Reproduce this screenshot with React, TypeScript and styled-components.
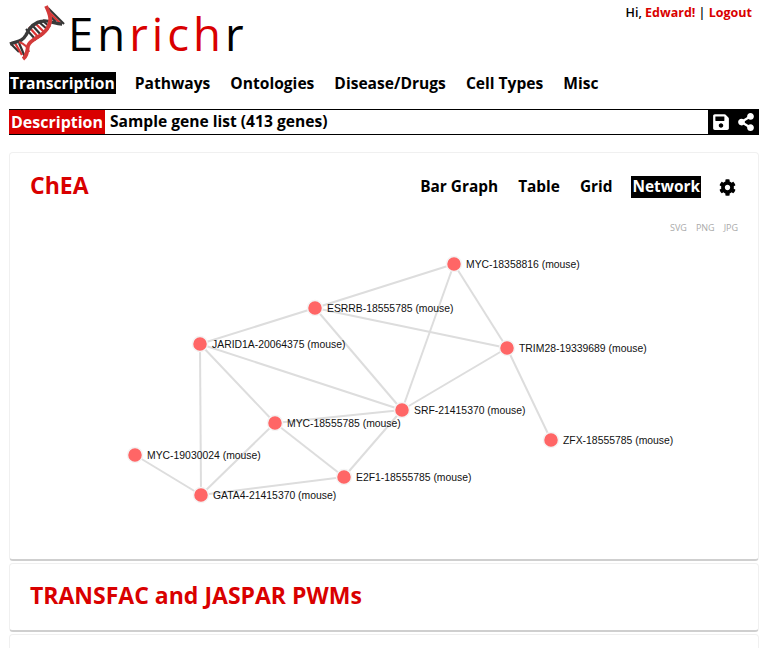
import React from "react";
import styled, { createGlobalStyle } from "styled-components";
import { FaSave, FaShareAlt, FaCog } from "react-icons/fa";

const Global = createGlobalStyle`
  html, body { margin: 0; padding: 0; background: #fff; overflow: hidden; }
  body { font-family: "Open Sans", "Liberation Sans", sans-serif; color: #000; }
`;

const Page = styled.div`
  width: 768px; height: 648px; overflow: hidden; padding: 0 9px; box-sizing: border-box;
`;
const Header = styled.header`
  display: flex; justify-content: space-between; height: 72px;
`;
const Brand = styled.div`
  display: flex; align-items: flex-start; padding-top: 2px; margin-left: -4px;
`;
const LogoSvg = styled.svg`
  display: block; flex: none;
`;
const Wordmark = styled.h1`
  margin: 3px 0 0 -1px; font-weight: 400; font-size: 45.5px; line-height: 56px; letter-spacing: 4px; color: #000;
`;
const Red = styled.span`color: #d90000;`;
const UserBar = styled.div`
  font-size: 12.5px; font-weight: 600; line-height: 17px; padding: 4px 7px 0 0;
`;
const UserLink = styled.span`color: #d90000; font-weight: 700;`;
const MainNav = styled.nav`
  display: flex; gap: 18px; height: 37px; align-items: flex-start;
`;
const NavItem = styled.span<{ $active?: boolean }>`
  font-size: 15.6px; font-weight: 700; line-height: 22px; height: 22px; padding: 0 1px;
  background: ${(p) => (p.$active ? "#000" : "transparent")};
  color: ${(p) => (p.$active ? "#fff" : "#000")};
`;
const DescBar = styled.div`
  display: flex; align-items: stretch; width: 750px; height: 26px; box-sizing: border-box;
  border-top: 1px solid #000; border-bottom: 1px solid #000; margin-bottom: 17px;
`;
const DescLabel = styled.div`
  background: #d90000; color: #fff; font-size: 16px; font-weight: 700; line-height: 24px; width: 96px; text-align: center; margin-right: 5px; flex: none;
`;
const DescText = styled.div`
  flex: 1; font-size: 15.6px; font-weight: 700; line-height: 22px; white-space: nowrap;
`;
const DescIcons = styled.div`
  background: #000; color: #fff; width: 51px; display: flex; align-items: center; justify-content: space-between; padding: 0 4px 0 4px; box-sizing: border-box; flex: none;
`;
const Card = styled.section`
  background: #fff; border-radius: 4px; width: 750px; box-sizing: border-box;
  border: 1px solid #f0f0f0; border-bottom: 2px solid #cfcfcf; margin-bottom: 2px;
`;
const ChartCard = styled(Card)`height: 409px; padding: 17px 20px 0;`;
const PlainCard = styled(Card)`height: 69px; padding: 16px 20px 0;`;
const EmptyCard = styled(Card)`height: 40px;`;
const CardHead = styled.div`
  display: flex; justify-content: space-between; align-items: flex-start; height: 51px;
`;
const CardTitle = styled.h2`
  margin: 0; font-size: 23px; line-height: 30px; font-weight: 700; color: #d90000;
`;
const Views = styled.div`
  display: flex; align-items: center; gap: 18px; padding: 6px 2px 0 0; color: #000;
`;
const ViewTab = styled.span<{ $active?: boolean }>`
  font-size: 15.4px; font-weight: 700; line-height: 22px; padding: 0 1px;
  background: ${(p) => (p.$active ? "#000" : "transparent")};
  color: ${(p) => (p.$active ? "#fff" : "#000")};
`;
const Exports = styled.div`
  display: flex; justify-content: flex-end; gap: 9px; font-size: 9px; line-height: 13px; color: #aaa; font-weight: 400;
`;
const GraphSvg = styled.svg`
  display: block; margin: -4px 0 0 -20px;
`;

type N = { id: string; x: number; y: number; label: string };
const OX = 10, OY = 230;
const nodes: N[] = [
  { id: "a", x: 454, y: 264, label: "MYC-18358816 (mouse)" },
  { id: "b", x: 315, y: 308, label: "ESRRB-18555785 (mouse)" },
  { id: "c", x: 200, y: 344, label: "JARID1A-20064375 (mouse)" },
  { id: "d", x: 507, y: 348, label: "TRIM28-19339689 (mouse)" },
  { id: "e", x: 402, y: 410, label: "SRF-21415370 (mouse)" },
  { id: "f", x: 275, y: 423, label: "MYC-18555785 (mouse)" },
  { id: "g", x: 551, y: 440, label: "ZFX-18555785 (mouse)" },
  { id: "h", x: 135, y: 455, label: "MYC-19030024 (mouse)" },
  { id: "i", x: 344, y: 477, label: "E2F1-18555785 (mouse)" },
  { id: "j", x: 201, y: 495, label: "GATA4-21415370 (mouse)" },
];
const edges = ["ab","ae","ad","bc","bd","be","ce","cf","cj","de","dg","ef","ei","fi","fj","hj","ij"];
const byId = (id: string) => nodes.find((n) => n.id === id)!;

const Graph = () => (
  <GraphSvg width={730} height={300} viewBox={`${OX} ${OY} 730 300`}>
    {edges.map((e) => {
      const a = byId(e[0]), b = byId(e[1]);
      return <line key={e} x1={a.x} y1={a.y} x2={b.x} y2={b.y} stroke="#ddd" strokeWidth={2} />;
    })}
    {nodes.map((n) => (
      <g key={n.id}>
        <circle cx={n.x} cy={n.y} r={7.5} fill="#ff6666" stroke="#f4f4f4" strokeWidth={1.5} />
        <text x={n.x + 12} y={n.y + 3.5} fontSize={10.4} fontFamily="'Liberation Sans', Arial, sans-serif" fill="#111">{n.label}</text>
      </g>
    ))}
  </GraphSvg>
);

const rungs: [number, number, number, number, string][] = [
  [6, 42, 14, 50, "#333"], [10, 41, 17, 53, "#d33"], [14, 41, 20, 55, "#333"],
  [21, 27, 31, 38, "#333"], [24, 25, 34, 36, "#d33"], [27, 23, 37, 34, "#333"],
  [30, 21, 40, 31, "#d33"], [34, 20, 43, 28, "#333"], [38, 19, 45, 25, "#333"],
  [43, 6, 59, 22, "#333"], [45, 11, 55, 21, "#d33"], [46, 15, 51, 20, "#333"],
];

const Logo = () => (
  <LogoSvg width={64} height={60} viewBox="0 0 64 60">
    {rungs.map(([x1, y1, x2, y2, c], i) => (
      <line key={i} x1={x1} y1={y1} x2={x2} y2={y2} stroke={c} strokeWidth={2.2} />
    ))}
    <path d="M5 42 C12 39 17 40 21 33 C25 24 30 20 38 19 C44 18 50 22 57 22" fill="none" stroke="#3a3a3a" strokeWidth={3.4} />
    <path d="M41 4 C46 14 47 20 42 27 C36 36 26 36 23 44 C22 50 22 54 18 57" fill="none" stroke="#d33a3a" strokeWidth={3.8} />
    <path d="M14 40 C20 42 23 46 24 50" fill="none" stroke="#d33a3a" strokeWidth={2} />
  </LogoSvg>
);

export default function App() {
  return (
    <>
      <Global />
      <Page>
        <Header>
          <Brand>
            <Logo />
            <Wordmark>En<Red>rich</Red>r</Wordmark>
          </Brand>
          <UserBar>Hi, <UserLink>Edward!</UserLink> | <UserLink>Logout</UserLink></UserBar>
        </Header>
        <MainNav>
          <NavItem $active>Transcription</NavItem>
          <NavItem>Pathways</NavItem>
          <NavItem>Ontologies</NavItem>
          <NavItem>Disease/Drugs</NavItem>
          <NavItem>Cell Types</NavItem>
          <NavItem>Misc</NavItem>
        </MainNav>
        <DescBar>
          <DescLabel>Description</DescLabel>
          <DescText>Sample gene list (413 genes)</DescText>
          <DescIcons><FaSave size={18} /><FaShareAlt size={18} /></DescIcons>
        </DescBar>
        <ChartCard>
          <CardHead>
            <CardTitle>ChEA</CardTitle>
            <Views>
              <ViewTab>Bar Graph</ViewTab>
              <ViewTab>Table</ViewTab>
              <ViewTab>Grid</ViewTab>
              <ViewTab $active>Network</ViewTab>
              <FaCog size={17} />
            </Views>
          </CardHead>
          <Exports><span>SVG</span><span>PNG</span><span>JPG</span></Exports>
          <Graph />
        </ChartCard>
        <PlainCard><CardTitle>TRANSFAC and JASPAR PWMs</CardTitle></PlainCard>
        <EmptyCard />
      </Page>
    </>
  );
}
